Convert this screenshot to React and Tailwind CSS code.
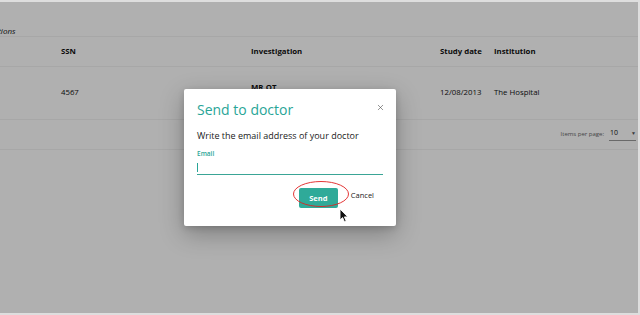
import { X } from "lucide-react";

/* ================= DATA ================= */
const COLUMNS = [
  { id: "name", label: "" },
  { id: "ssn", label: "SSN" },
  { id: "investigation", label: "Investigation" },
  { id: "date", label: "Study date" },
  { id: "institution", label: "Institution" },
];

const ROWS = [
  {
    name: "",
    ssn: "4567",
    investigation: "MR,OT",
    date: "12/08/2013",
    institution: "The Hospital",
  },
];

const GRID = "grid grid-cols-[61px_190px_189px_54px_1fr] items-center";

function Cursor() {
  return (
    <svg width="10" height="15" viewBox="0 0 10 15" className="absolute left-[339px] top-[206px]">
      <path
        d="M1 1 L1 12 L3.6 9.6 L5.4 13.8 L7.2 13 L5.4 8.9 L8.8 8.9 Z"
        fill="#111"
        stroke="#fff"
        strokeWidth="0.9"
        strokeLinejoin="round"
      />
    </svg>
  );
}

export default function App() {
  return (
    <div className="w-[640px] h-[315px] overflow-hidden bg-[#dedede] pt-[2px] pr-[2px] pb-[2px]">
      <div className="relative h-full overflow-hidden bg-white font-['Open_Sans',sans-serif] text-[#111]">
        {/* TITLE */}
        <div className="h-[35px] flex items-end pb-[1px] border-b border-[#f2f2f2] overflow-hidden">
          <span className="ml-[-33px] text-[8px] italic leading-none whitespace-nowrap">Investigations</span>
        </div>

        {/* HEADER */}
        <div className={`${GRID} h-[30px] border-b border-[#f2f2f2] text-[7.8px] font-bold`}>
          {COLUMNS.map((c) => (
            <div key={c.id}>{c.label}</div>
          ))}
        </div>

        {/* ROWS */}
        {ROWS.map((r, i) => (
          <div key={i} className={`${GRID} h-[53px] border-b border-[#f2f2f2] text-[7.8px]`}>
            <div>{r.name}</div>
            <div>{r.ssn}</div>
            <div className="self-start pt-[13px] font-bold leading-[14px]">{r.investigation}</div>
            <div>{r.date}</div>
            <div>{r.institution}</div>
          </div>
        ))}

        {/* PAGINATION */}
        <div className="h-[30px] border-b border-[#f2f2f2] flex items-center justify-end gap-[5px] pr-[2px] text-[6px] text-[#666]">
          <span>Items per page:</span>
          <div className="flex items-center gap-[8px] w-[27px] border-b border-[#999] pb-[1px] text-[7px] text-[#111]">
            <span className="pl-[1px]">10</span>
            <span className="text-[5px] text-[#555] ml-auto">▼</span>
          </div>
        </div>

        {/* OVERLAY */}
        <div className="absolute inset-0 bg-black/[0.31]" />

        {/* DIALOG */}
        <div className="absolute left-[184px] top-[87px] w-[212px] h-[137px] bg-white rounded-[2px] shadow-[0_8px_24px_rgba(0,0,0,0.28),0_2px_6px_rgba(0,0,0,0.15)] px-[13px] pt-[14px]">
          <div className="flex items-start justify-between">
            <h2 className="text-[14px] leading-none text-[#29a597]">Send to doctor</h2>
            <X size={9} strokeWidth={1.5} className="text-[#444] mt-[0px] mr-[-2px]" />
          </div>

          <p className="mt-[14px] text-[9px] leading-none text-[#1a1a1a]">
            Write the email address of your doctor
          </p>

          <label className="block mt-[11px] text-[6.5px] font-semibold leading-none text-[#29a597]">
            Email
          </label>
          <div className="mt-[5px] h-[12px] border-b-[1.5px] border-[#3aa596] flex items-start">
            <span className="block w-[1px] h-[9px] bg-[#29a597]" />
          </div>

          <div className="mt-[8px] flex items-center justify-end gap-[13px] pr-[9px]">
            <div className="relative">
              <button className="w-[39px] h-[20px] rounded-[2px] bg-[#2faa99] text-white text-[7.5px] font-bold">
                Send
              </button>
              <svg width="58" height="28" className="absolute left-[-7px] top-[-3px] pointer-events-none">
                <ellipse cx="29" cy="14" rx="27.5" ry="12.5" fill="none" stroke="#e02020" strokeWidth="0.9" />
              </svg>
            </div>
            <span className="text-[7.5px] text-[#222]">Cancel</span>
          </div>
        </div>

        <Cursor />
      </div>
    </div>
  );
}
